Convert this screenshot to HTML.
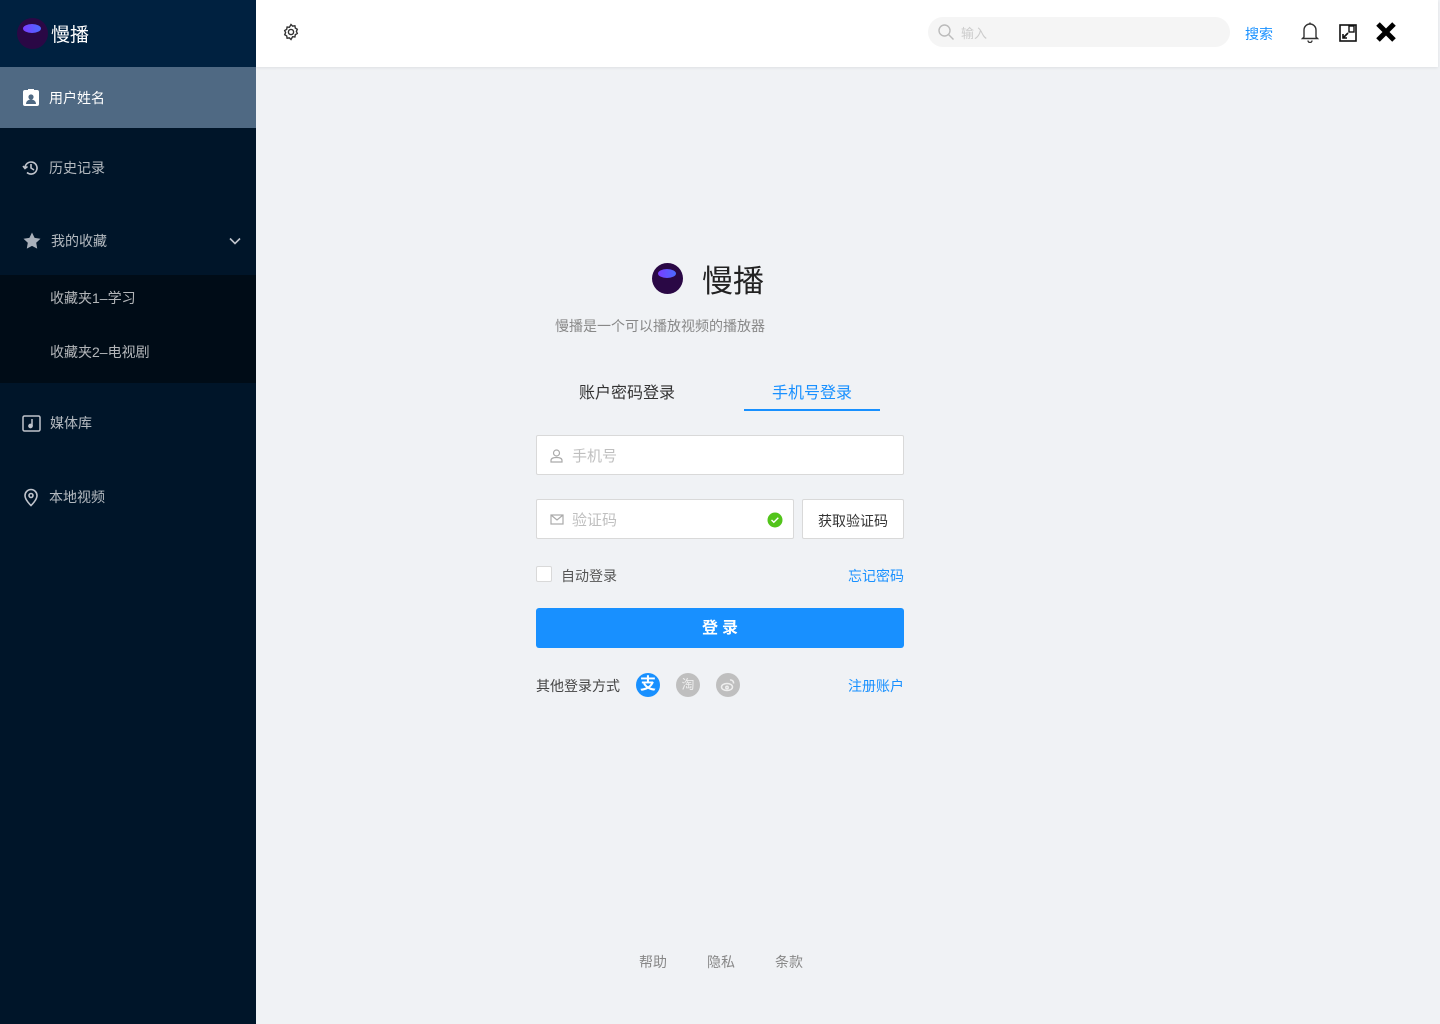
<!DOCTYPE html>
<html><head><meta charset="utf-8"><style>
*{margin:0;padding:0;box-sizing:border-box}
body{width:1440px;height:1024px;overflow:hidden;background:#f0f2f5;font-family:"Liberation Sans","Noto Sans CJK SC",sans-serif;position:relative}
.side{position:absolute;left:0;top:0;width:256px;height:1024px;background:#001529}
.logo{height:67px;background:#002140;display:flex;align-items:center;padding-left:17px;color:#fff;font-size:19px}
.ball{width:31px;height:31px;border-radius:50%;background:#2a0845;position:relative;margin-right:3px}
.ball:after{content:"";position:absolute;left:6px;top:6px;width:18px;height:9px;border-radius:50%;background:linear-gradient(90deg,#7a3cff,#4a6bff)}
.item{position:absolute;left:0;width:256px;display:flex;align-items:center;color:rgba(255,255,255,.7);font-size:14px}
.item svg{margin-left:22px;margin-right:9px}
.top{position:absolute;left:256px;top:0;width:1182px;height:67px;background:#fff;box-shadow:0 1px 3px rgba(0,0,0,.08)}
.search{position:absolute;left:928px;top:17px;width:302px;height:30px;border-radius:15px;background:#f5f5f5;color:#ccc;font-size:13px;padding:6px 0 0 33px}
.inp{position:absolute;background:#fff;border:1px solid #d9d9d9;border-radius:2px;color:#bfbfbf;font-size:15px}
</style></head><body>
<div class="side">
 <div class="logo"><div class="ball"></div>慢播</div>
 <div class="item" style="top:67px;height:61px;background:#4f6983;color:#fff">
  <svg width="18" height="18" viewBox="0 0 18 18"><rect x="1" y="1" width="16" height="16" rx="2" fill="#fff"/><rect x="6" y="0" width="6" height="3" fill="#fff"/><circle cx="9" cy="8" r="2.6" fill="#4f6983"/><path d="M4 15c0-3 2.5-4.5 5-4.5s5 1.5 5 4.5z" fill="#4f6983"/></svg>用户姓名</div>
 <div class="item" style="top:140px;height:56px">
  <svg width="18" height="18" viewBox="0 0 18 18" fill="none" stroke="#c0c4cc" stroke-width="1.6"><path d="M3 9a6 6 0 1 1 2 4.5"/><path d="M1 7l2 2.5 2.5-2"/><path d="M9 5v4l3 2"/></svg>历史记录</div>
 <div class="item" style="top:213px;height:56px">
  <svg width="20" height="20" viewBox="0 0 20 20"><path d="M10 1.5l2.6 5.4 5.9.8-4.3 4.1 1 5.8L10 14.9 4.8 17.6l1-5.8L1.5 7.7l5.9-.8z" fill="#a9b0ba"/></svg>我的收藏
  <svg style="position:absolute;left:229px;margin:0" width="12" height="8" viewBox="0 0 12 8" fill="none" stroke="#c0c4cc" stroke-width="1.6"><path d="M1 1.5l5 5 5-5"/></svg></div>
 <div style="position:absolute;top:275px;left:0;width:256px;height:108px;background:#000c17"></div>
 <div class="item" style="top:275px;height:46px;padding-left:50px">收藏夹1–学习</div>
 <div class="item" style="top:329px;height:46px;padding-left:50px">收藏夹2–电视剧</div>
 <div class="item" style="top:395px;height:56px">
  <svg width="19" height="17" viewBox="0 0 19 17" fill="none" stroke="#c0c4cc" stroke-width="1.5"><rect x="1" y="1" width="17" height="15" rx="1.5"/><path d="M10 4v7" /><circle cx="8.5" cy="11" r="1.6" fill="#c0c4cc"/></svg>媒体库</div>
 <div class="item" style="top:469px;height:56px">
  <svg width="18" height="20" viewBox="0 0 18 20" fill="none" stroke="#c0c4cc" stroke-width="1.6"><path d="M9 18.5s-6-5.5-6-10a6 6 0 0 1 12 0c0 4.5-6 10-6 10z"/><circle cx="9" cy="8.5" r="2"/></svg>本地视频</div>
</div>
<div class="top">
 <svg style="position:absolute;left:26px;top:23px" width="18" height="18" viewBox="0 0 18 18" fill="none" stroke="#333" stroke-width="1.4"><circle cx="9" cy="9" r="2.6"/><path d="M9 1.5l1.6 1.6 2.3-.3.4 2.3 2 1.2-.9 2.1.9 2.1-2 1.2-.4 2.3-2.3-.3L9 16.5l-1.6-1.6-2.3.3-.4-2.3-2-1.2.9-2.1-.9-2.1 2-1.2.4-2.3 2.3.3z"/></svg>
</div>
<div class="search"><svg style="position:absolute;left:9px;top:6px" width="18" height="18" viewBox="0 0 18 18" fill="none" stroke="#bbb" stroke-width="1.4"><circle cx="7.5" cy="7.5" r="5.5"/><path d="M11.5 11.5l5 5"/></svg>输入</div>
<div style="position:absolute;left:1245px;top:24px;color:#1890ff;font-size:14px">搜索</div>
<svg style="position:absolute;left:1300px;top:21px" width="20" height="22" viewBox="0 0 20 22" fill="none" stroke="#333" stroke-width="1.4"><path d="M4 16V9a6 6 0 0 1 12 0v7l1.5 1.5h-15z"/><path d="M8 19.5a2 2 0 0 0 4 0"/><path d="M10 1.5v1.5"/></svg>
<svg style="position:absolute;left:1339px;top:24px" width="18" height="18" viewBox="0 0 18 18"><rect x="1" y="1" width="16" height="16" fill="none" stroke="#111" stroke-width="1.6"/><rect x="10" y="2" width="5" height="6" fill="none" stroke="#111" stroke-width="1.4"/><path d="M4 14l5-5M4 10v4h4" stroke="#111" stroke-width="1.6" fill="none"/></svg>
<svg style="position:absolute;left:1375px;top:21px" width="22" height="22" viewBox="0 0 22 22"><path d="M3 3l16 16M19 3L3 19" stroke="#000" stroke-width="5"/></svg>
<div class="ball" style="position:absolute;left:652px;top:263px;width:31px;height:31px;margin:0"></div>
<div style="position:absolute;left:702px;top:256px;font-size:31px;color:#222">慢播</div>
<div style="position:absolute;left:555px;top:316px;font-size:14px;color:#888">慢播是一个可以播放视频的播放器</div>
<div style="position:absolute;left:579px;top:379px;font-size:16px;color:#333">账户密码登录</div>
<div style="position:absolute;left:772px;top:379px;font-size:16px;color:#1890ff">手机号登录</div>
<div style="position:absolute;left:744px;top:409px;width:136px;height:2px;background:#1890ff"></div>
<div class="inp" style="left:536px;top:435px;width:368px;height:40px;padding:9px 0 0 35px">手机号
 <svg style="position:absolute;left:12px;top:12px" width="15" height="15" viewBox="0 0 15 15" fill="none" stroke="#aaa" stroke-width="1.2"><circle cx="7.5" cy="5" r="3"/><path d="M2 14v-1.5c0-2 2-3 5.5-3s5.5 1 5.5 3V14z"/></svg></div>
<div class="inp" style="left:536px;top:499px;width:258px;height:40px;padding:9px 0 0 35px">验证码
 <svg style="position:absolute;left:13px;top:14px" width="14" height="11" viewBox="0 0 14 11" fill="none" stroke="#aaa" stroke-width="1.2"><rect x="1" y="1" width="12" height="9"/><path d="M1 1l6 5 6-5"/></svg>
 <svg style="position:absolute;left:230px;top:12px" width="16" height="16" viewBox="0 0 16 16"><circle cx="8" cy="8" r="7.5" fill="#52c41a"/><path d="M4.5 8l2.3 2.3 4.5-4.5" stroke="#fff" stroke-width="1.4" fill="none"/></svg></div>
<div class="inp" style="left:802px;top:499px;width:102px;height:40px;color:#333;font-size:14px;text-align:center;padding-top:11px">获取验证码</div>
<div style="position:absolute;left:536px;top:566px;width:16px;height:16px;border:1px solid #d9d9d9;background:#fff;border-radius:2px"></div>
<div style="position:absolute;left:561px;top:566px;font-size:14px;color:#555">自动登录</div>
<div style="position:absolute;left:848px;top:566px;font-size:14px;color:#1890ff">忘记密码</div>
<div style="position:absolute;left:536px;top:608px;width:368px;height:40px;background:#1890ff;border-radius:3px;color:#fff;font-size:16px;font-weight:bold;text-align:center;line-height:42px;letter-spacing:4px;padding-left:4px">登录</div>
<div style="position:absolute;left:536px;top:676px;font-size:14px;color:#444">其他登录方式</div>
<div style="position:absolute;left:636px;top:673px;width:24px;height:24px;border-radius:50%;background:#1890ff;color:#fff;font-size:16px;text-align:center;line-height:23px;font-weight:bold">支</div>
<div style="position:absolute;left:676px;top:673px;width:24px;height:24px;border-radius:50%;background:#bfbfbf;color:#eee;font-size:13px;text-align:center;line-height:24px">淘</div>
<div style="position:absolute;left:716px;top:673px;width:24px;height:24px;border-radius:50%;background:#bfbfbf"><svg width="24" height="24" viewBox="0 0 24 24" fill="none" stroke="#eee" stroke-width="1.5"><ellipse cx="11" cy="14" rx="5.5" ry="3.5"/><circle cx="11" cy="14.5" r="1.2"/><path d="M14 7a3 3 0 0 1 3.5 3.5"/></svg></div>
<div style="position:absolute;left:848px;top:676px;font-size:14px;color:#1890ff">注册账户</div>
<div style="position:absolute;left:639px;top:952px;font-size:14px;color:#888">帮助</div>
<div style="position:absolute;left:707px;top:952px;font-size:14px;color:#888">隐私</div>
<div style="position:absolute;left:775px;top:952px;font-size:14px;color:#888">条款</div>
</body></html>
